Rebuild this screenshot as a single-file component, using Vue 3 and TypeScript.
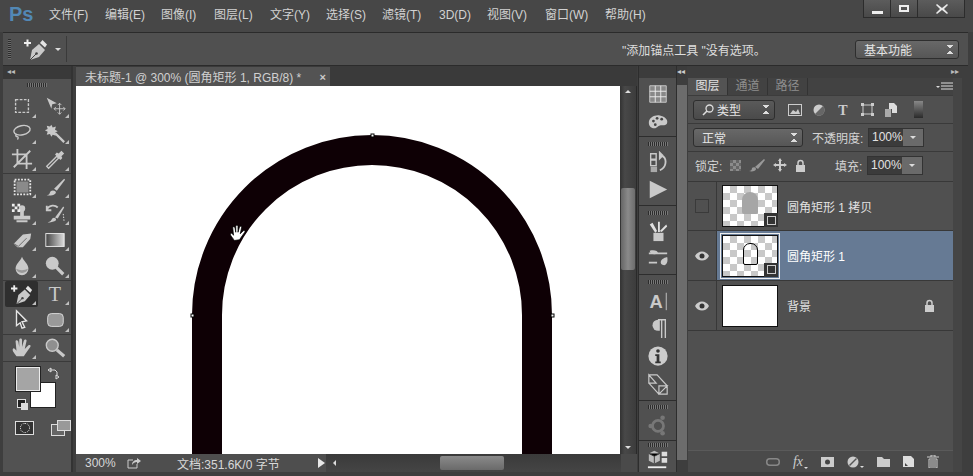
<script setup lang="ts">
const c = '#c9c9c9'
const menus = ['文件(F)', '编辑(E)', '图像(I)', '图层(L)', '文字(Y)', '选择(S)', '滤镜(T)', '3D(D)', '视图(V)', '窗口(W)', '帮助(H)']

const penShape = `<path d="M6 23l2-10 7-6 6 6-6 7z" fill="${c}"/><path d="M6 23l6-6" stroke="#444" fill="none"/><circle cx="12.500" cy="16.500" r="1.300" fill="#444"/><path d="M16 6l2.500-3 4.500 4.500-2 3z" fill="#e4e4e4"/>`
const plus = `<path d="M0 6h7M3.500 2.500v7" stroke="#eee" stroke-width="2"/>`

const toolGroups = [
  [
    { svg: `<rect x="5" y="5" width="14" height="14" fill="none" stroke="${c}" stroke-width="1.500" stroke-dasharray="3 1.500"/>`, more: true },
    { svg: `<path d="M3 3l11 6-5 1-1 5z" fill="${c}"/><path d="M17 9v12M11 15h12M17 9l-2 2M17 9l2 2M17 21l-2-2M17 21l2-2M11 15l2-2M11 15l2 2M23 15l-2-2M23 15l-2 2" stroke="${c}" fill="none"/>`, more: true },
    { svg: `<ellipse cx="12" cy="9" rx="9" ry="5" fill="none" stroke="${c}" stroke-width="1.500" transform="rotate(-12 12 9)"/><path d="M6 13c-2 2 0 3 1 3s1 2 0 3" stroke="${c}" stroke-width="1.500" fill="none"/>`, more: true },
    { svg: `<path d="M8 3l1.500 3 3.500-1-1 3.500 3 1.500-3 1.500 1 3.500-3.500-1L8 16l-1.500-3-3.500 1 1-3.500-3-1.500 3-1.500-1-3.500 3.500 1z" fill="${c}"/><path d="M12 12l10 10" stroke="${c}" stroke-width="2.500"/>`, more: true },
    { svg: `<path d="M7 1v16h16M1 7h16v16M3 21L21 3" stroke="${c}" stroke-width="2" fill="none"/>`, more: true },
    { svg: `<path d="M4 21l-1-1 11-11 2 2L5 22z" fill="none" stroke="${c}" stroke-width="1.500"/><path d="M12 7l6 6 2-2-1-2 3-3-3-3-3 3-2-1z" fill="${c}"/>`, more: true }
  ],
  [
    { svg: `<rect x="6" y="6" width="13" height="12" fill="#8a8a8a"/><path d="M4 4h17v16H4z" fill="none" stroke="#e6e6e6" stroke-dasharray="2 1.500" stroke-width="2"/>`, more: true },
    { svg: `<path d="M11 14L22 3l1 1-9 12z" fill="${c}"/><path d="M3 21c3 0 3-2 4-4 2-2 6-1 6 1s-4 4-10 3z" fill="${c}"/>`, more: true },
    { svg: `<circle cx="12" cy="7" r="3.500" fill="${c}"/><path d="M10 9h4v6h-4zM3 15h18v4H3zM6 20h12v2H6z" fill="${c}"/><path d="M1 2h3v3H1zM4 5h3v3H4zM7 2h3v3H7zM1 8h3v3H1zM7 8h3v3H7z" fill="#eee"/>`, more: true },
    { svg: `<path d="M3 8c3-5 9-5 12-2M3 4v5h5" stroke="${c}" stroke-width="2" fill="none"/><path d="M12 17L21 5l1 1-7 12z" fill="${c}"/><path d="M4 22c3 0 4-2 5-4 2-2 5 0 4 2-1 1-5 3-9 2z" fill="${c}"/><path d="M21 13l1 9" stroke="#eee" stroke-dasharray="1.500 1.500"/>`, more: true },
    { svg: `<path d="M3 16L13 6l9-1-1 6-8 9H7z" fill="${c}"/><path d="M3 16l5 3 9-9" stroke="#666" fill="none"/>`, more: true },
    { svg: `<defs><linearGradient id="toolGrad"><stop offset="0" stop-color="#444"/><stop offset="1" stop-color="#ddd"/></linearGradient></defs><rect x="2" y="5" width="20" height="14" fill="url(#toolGrad)" stroke="#eee"/>`, more: true },
    { svg: `<path d="M12 2c2 5 7 8 7 13a7 7 0 0 1-14 0c0-5 5-8 7-13z" fill="${c}"/><path d="M5.500 15c4 2 9 2 13 0-1 6-12 6-13 0z" fill="#999"/>`, more: true },
    { svg: `<circle cx="9" cy="9" r="7" fill="${c}"/><path d="M13 13l8 8" stroke="${c}" stroke-width="3.500"/>`, more: true }
  ],
  [
    { svg: plus + penShape, more: true, active: true },
    { svg: `<text x="12" y="20" text-anchor="middle" font-family="Liberation Serif, serif" font-size="22" fill="${c}">T</text>`, more: true },
    { svg: `<path d="M6 2l11 11-5 1 3 6-3 1-2-6-4 3z" fill="#3f3f3f" stroke="#e6e6e6" stroke-width="1.500"/>`, more: true },
    { svg: `<rect x="4" y="5" width="17" height="14" rx="4" fill="#999" stroke="#ddd"/>`, more: true }
  ],
  [
    { svg: `<path d="M6 21c-2-3-5-6-4-8s3 1 4 2L5 5c0-2 2-2 3 0l1 6V3c0-2 3-2 3 0v8l2-7c1-2 3-1 3 0l-2 9 4-4c2-1 3 0 2 2l-5 7-2 3z" fill="${c}"/>`, more: true },
    { svg: `<circle cx="9" cy="9" r="6.500" fill="#8f8f8f" stroke="${c}" stroke-width="1.500"/><path d="M14 14l8 7" stroke="${c}" stroke-width="3.500"/>`, more: false }
  ]
]

type DockIcon = { svg: string }
const dockGroups: DockIcon[][] = [
  [
    { svg: `<path d="M3 3h18v18H3z" fill="#888" stroke="#ccc"/><path d="M3 9h18M3 15h18M9 3v18M15 3v18" stroke="#eee"/>` },
    { svg: `<path d="M2 14c0-6 7-9 12-8s9 4 8 8-5 2-8 3-3 3-6 3-6-2-6-6z" fill="${c}"/><circle cx="7" cy="12" r="1.500" fill="#444"/><circle cx="11" cy="9" r="1.500" fill="#444"/><circle cx="16" cy="10" r="1.500" fill="#444"/><circle cx="9" cy="16" r="1.500" fill="#444"/>` }
  ],
  [
    { svg: `<path d="M4 3h6v6H4zM4 10h6v6H4z" fill="none" stroke="${c}" stroke-width="1.500"/><path d="M4 17h7v6H4z" fill="#aaa"/><path d="M14 5c5 0 7 4 6 9s-4 6-6 7M14 2v6l3-3z" stroke="${c}" stroke-width="2" fill="none"/>` },
    { svg: `<path d="M3 3l19 9.500L3 22z" fill="${c}"/>` }
  ],
  [
    { svg: `<path d="M7 14h11v9H7z" fill="${c}"/><path d="M9 14L3 5l3-2 5 9zM12 13V2h2v11zM16 13l6-6-1-2-7 7z" fill="#e0e0e0"/>` },
    { svg: `<path d="M2 7h20M2 17h9" stroke="${c}" stroke-width="2"/><path d="M3 4c5-1 9 0 9 3-5 2-9 0-9-3zM15 17c0-3 3-5 7-6 1 4 0 8-3 9-2 0-4-1-4-3z" fill="${c}"/>` }
  ],
  [
    { svg: `<text x="10" y="20" text-anchor="middle" font-family="Liberation Sans, sans-serif" font-weight="700" font-size="20" fill="${c}">A</text><path d="M21 3v19" stroke="${c}"/>` },
    { svg: `<path d="M12 3h8v20M16 3v20" stroke="${c}" stroke-width="1.500" fill="none"/><path d="M12 3a6 6 0 0 0 0 12h2V3z" fill="${c}"/>` },
    { svg: `<circle cx="12" cy="12" r="10.500" fill="#ccc"/><circle cx="12" cy="6.500" r="2" fill="#333"/><path d="M9 10h4.500v8H15v2H9v-2h1.500v-6H9z" fill="#333"/>` },
    { svg: `<path d="M2 2h9l11 12v9h-9L2 11zM2 2v9h8zM13 23v-9h9zM11 2l11 12" fill="none" stroke="${c}" stroke-width="1.300"/>` }
  ],
  [
    { svg: `<circle cx="12" cy="13" r="6" fill="none" stroke="#777" stroke-width="3"/><circle cx="17" cy="4" r="2.500" fill="#777"/><circle cx="4" cy="13" r="2.500" fill="#777"/><circle cx="17" cy="21" r="2.500" fill="#777"/>` }
  ],
  [
    { svg: `<path d="M2 6l6-3 6 3v8l-6 3-6-3z" fill="#bbb"/><path d="M8 9v8M2 6l6 3 6-3" stroke="#333"/><path d="M16 4h6v5h-6zM16 11h6v5h-6z" fill="#ddd"/><path d="M1 20h20v2H1z" fill="#eee"/>` }
  ]
]

const dockHeights = [59, 69, 69, 126, 40, 31]
</script>

<template>
  <div class="app">
    <header class="menubar">
      <span class="logo">Ps</span>
      <nav class="menus">
        <span v-for="m in menus" :key="m">{{ m }}</span>
      </nav>
      <div class="winbtns">
        <span class="wb"><i class="min"></i></span>
        <span class="wb"><i class="max"></i></span>
        <span class="wb close"><svg width="12" height="10" viewBox="0 0 12 10"><path d="M1 0l5 4 5-4 1 1-4 4 4 4-1 1-5-4-5 4-1-1 4-4-4-4z" fill="#e8e8e8" /></svg></span>
      </div>
    </header>

    <div class="options">
      <span class="grip-v"></span>
      <svg class="opt-pen" width="24" height="24" viewBox="0 0 24 24" v-html="plus + penShape"></svg>
      <span class="caret"></span>
      <span class="opt-sep"></span>
      <span class="opt-text">"添加锚点工具 "没有选项。</span>
      <div class="select workspace"><span>基本功能</span><i class="updown"></i></div>
    </div>

    <main class="workspace-row">
      <aside class="tools">
        <div class="collapse">◂◂</div>
        <div class="grip"></div>
        <div v-for="(g, i) in toolGroups" :key="i" class="tool-group">
          <div v-for="(t, j) in g" :key="j" class="tool" :class="{ active: t.active, more: t.more }">
            <svg width="22" height="22" viewBox="0 0 24 24" v-html="t.svg"></svg>
          </div>
        </div>
        <div class="colors">
          <span class="bg-swatch"></span>
          <span class="fg-swatch"></span>
          <svg class="swap" width="13" height="13" viewBox="0 0 13 13"><path d="M1 3l3-2v4zM12 10L9 8v4zM3 3h5l2 2v4" stroke="#ddd" fill="none" stroke-width="1" /></svg>
          <span class="mini-a"></span>
          <span class="mini-b"></span>
        </div>
        <div class="mode-row">
          <span class="quickmask"><i></i></span>
          <svg width="20" height="16" viewBox="0 0 20 16"><rect x="0.500" y="4.500" width="13" height="11" fill="#666" stroke="#ddd" /><rect x="6.500" y="0.500" width="13" height="10" fill="#999" stroke="#ddd" /></svg>
        </div>
      </aside>

      <section class="doc">
        <div class="tabbar">
          <div class="tab">
            <span>未标题-1 @ 300% (圆角矩形 1, RGB/8) *</span>
            <b>×</b>
          </div>
        </div>
        <div class="doc-body">
          <div class="canvas">
            <svg class="arch" width="544" height="368" viewBox="0 0 544 368">
              <path d="M131 400V229a165 165 0 0 1 330 0V400" fill="none" stroke="#0e0005" stroke-width="30" />
              <rect x="115" y="228" width="3" height="3" fill="#fff" stroke="#000" />
              <rect x="475" y="228" width="3" height="3" fill="#fff" stroke="#000" />
              <rect x="295" y="48" width="3" height="3" fill="#fff" stroke="#000" />
            </svg>
            <svg class="cursor" width="18" height="18" viewBox="0 0 24 24"><path d="M7 22c-2-4-6-7-5-9s3 0 4 2L5 5c0-2 2-2 3 0l1 6V3c0-2 3-2 3 0v8l2-7c1-2 3-1 3 0l-2 9 4-4c2-1 3 0 2 2l-5 7-2 3z" fill="#fff" stroke="#000" /></svg>
          </div>
          <div class="vscroll">
            <span class="arrow-up"></span>
            <span class="vthumb"></span>
            <span class="arrow-down"></span>
          </div>
        </div>
        <div class="status">
          <span class="zoomval">300%</span>
          <svg class="share" width="14" height="12" viewBox="0 0 14 12"><path d="M1 3h5M1 3v8h9V7" stroke="#ccc" fill="none" /><path d="M5 8c0-3 2-5 5-5V1l4 3-4 3V5C8 5 6 6 5 8z" fill="#ccc" /></svg>
          <span class="docinfo">文档:351.6K/0 字节</span>
          <span class="play"></span>
          <div class="hscroll">
            <span class="arrow-left"></span>
            <span class="hthumb"></span>
          </div>
        </div>
      </section>

      <aside class="dock">
        <div class="dock-head"></div>
        <div v-for="(g, i) in dockGroups" :key="i" class="dock-group" :style="{ height: dockHeights[i] + 'px' }">
          <div v-if="i > 0" class="grip dock-grip"></div>
          <svg v-for="(ic, j) in g" :key="j" width="22" height="22" viewBox="0 0 24 24" v-html="ic.svg"></svg>
        </div>
      </aside>
      <div class="dock-scroll">
        <div class="dock-scroll-head">◂◂</div>
        <div class="dock-scroll-bar"></div>
      </div>

      <aside class="panel">
        <div class="panel-head">▸▸</div>
        <div class="tabs">
          <span class="ptab on">图层</span>
          <span class="ptab">通道</span>
          <span class="ptab">路径</span>
          <span class="pmenu">
            <i class="caret small"></i>
            <svg width="12" height="9" viewBox="0 0 12 9"><path d="M0 1h12M0 4h12M0 7h12" stroke="#ddd" /></svg>
          </span>
        </div>
        <div class="row filter">
          <div class="select type">
            <span class="type-label">
              <svg width="12" height="12" viewBox="0 0 12 12"><circle cx="7.500" cy="4.500" r="3.500" fill="none" stroke="#ddd" stroke-width="1.300" /><path d="M5 7l-4 4" stroke="#ddd" stroke-width="1.600" /></svg>
              类型
            </span>
            <i class="updown"></i>
          </div>
          <div class="filter-icons">
            <svg width="14" height="12" viewBox="0 0 14 12"><rect x="0.500" y="0.500" width="13" height="11" fill="none" stroke="#ccc" /><path d="M2 10l3-4 3 2 2-3 2 5z" fill="#ccc" /></svg>
            <svg width="12" height="12" viewBox="0 0 12 12"><circle cx="6" cy="6" r="5.500" fill="#ccc" /><path d="M10 2a5.500 5.500 0 0 1-8 8z" fill="#666" /></svg>
            <svg width="14" height="14" viewBox="0 0 14 14"><text x="7" y="12" text-anchor="middle" font-family="Liberation Serif, serif" font-weight="700" font-size="14" fill="#ccc">T</text></svg>
            <svg width="13" height="13" viewBox="0 0 13 13"><rect x="2" y="2" width="9" height="9" fill="none" stroke="#ccc" /><path d="M0 0h3v3H0zM10 0h3v3h-3zM0 10h3v3H0zM10 10h3v3h-3z" fill="#ccc" /></svg>
            <svg width="12" height="14" viewBox="0 0 12 14"><path d="M4 0h5l3 3v7H7V6H4z" fill="#ddd" /><path d="M0 6h6v8H0z" fill="#aaa" /></svg>
            <span class="filter-toggle"></span>
          </div>
        </div>
        <div class="row blend">
          <div class="select mode"><span>正常</span><i class="updown"></i></div>
          <span class="lbl">不透明度:</span>
          <div class="pct"><span>100%</span><i><b class="caret"></b></i></div>
        </div>
        <div class="row lock">
          <span class="lbl">锁定:</span>
          <div class="lock-icons">
            <span class="checker-mini"></span>
            <svg width="16" height="14" viewBox="0 0 16 14"><path d="M6 9l9-8 1 1-7 9z" fill="#999" /><path d="M0 13c2 0 3-1 3-3 1-1 4-1 4 1s-4 3-7 2z" fill="#999" /></svg>
            <svg width="14" height="14" viewBox="0 0 14 14"><path d="M7 0l2 3H8v3h3V5l3 2-3 2V8H8v3h1l-2 3-2-3h1V8H3v1L0 7l3-2v1h3V3H5z" fill="#ccc" /></svg>
            <svg width="11" height="13" viewBox="0 0 11 13"><path d="M3 6V4a2.500 2.500 0 0 1 5 0v2" stroke="#ccc" stroke-width="1.500" fill="none" /><rect x="1" y="6" width="9" height="7" fill="#ccc" /></svg>
          </div>
          <span class="lbl fill-lbl">填充:</span>
          <div class="pct"><span>100%</span><i><b class="caret"></b></i></div>
        </div>

        <div class="layers">
          <div class="layer">
            <div class="eye-cell"><span class="eye-off"></span></div>
            <div class="thumb checker">
              <span class="ghost"></span>
              <span class="badge"><i></i></span>
            </div>
            <span class="lname">圆角矩形 1 拷贝</span>
          </div>
          <div class="layer selected">
            <div class="eye-cell">
              <svg width="14" height="10" viewBox="0 0 14 10"><path d="M0 5c3-6 11-6 14 0-3 6-11 6-14 0z" fill="#ccc" /><circle cx="7" cy="5" r="2.500" fill="#333" /></svg>
            </div>
            <div class="thumb checker framed">
              <span class="outline"></span>
              <span class="badge"><i></i></span>
            </div>
            <span class="lname">圆角矩形 1</span>
          </div>
          <div class="layer">
            <div class="eye-cell">
              <svg width="14" height="10" viewBox="0 0 14 10"><path d="M0 5c3-6 11-6 14 0-3 6-11 6-14 0z" fill="#ccc" /><circle cx="7" cy="5" r="2.500" fill="#333" /></svg>
            </div>
            <div class="thumb white"></div>
            <span class="lname">背景</span>
            <svg class="layer-lock" width="11" height="13" viewBox="0 0 11 13"><path d="M3 6V4a2.500 2.500 0 0 1 5 0v2" stroke="#ccc" stroke-width="1.500" fill="none" /><rect x="1" y="6" width="9" height="7" fill="#ccc" /></svg>
          </div>
        </div>

        <div class="panel-foot">
          <svg width="14" height="8" viewBox="0 0 14 8"><rect x="0.750" y="0.750" width="12.500" height="6.500" rx="3" fill="none" stroke="#888" stroke-width="1.500" /></svg>
          <span class="fx">fx<b class="caret small"></b></span>
          <svg width="13" height="10" viewBox="0 0 13 10"><path d="M0 0h13v10H0z" fill="#ccc" /><circle cx="6.500" cy="5" r="2.500" fill="#444" /></svg>
          <span class="adj"><svg width="12" height="12" viewBox="0 0 12 12"><circle cx="6" cy="6" r="5.500" fill="#ccc" /><path d="M9.500 2.500l-7 7" stroke="#555" stroke-width="1.500" /></svg><b class="caret small"></b></span>
          <svg width="13" height="10" viewBox="0 0 13 10"><path d="M0 0h5l2 2h6v8H0z" fill="#ccc" /></svg>
          <svg width="11" height="11" viewBox="0 0 11 11"><path d="M0 0h8l3 3v8H0z" fill="#ddd" /><path d="M2 7l3 3H2z" fill="#444" /></svg>
          <svg width="12" height="13" viewBox="0 0 12 13"><path d="M0 2h12M4 2V0h4v2M2 4h8v9H2z" stroke="#ccc" fill="none" /><path d="M4 5v7M6 5v7M8 5v7" stroke="#ccc" /></svg>
        </div>
      </aside>
      <div class="panel-scroll"></div>
    </main>
  </div>
</template>

<style scoped>
.app {
  width: 973px;
  height: 476px;
  display: flex;
  flex-direction: column;
  overflow: hidden;
  background: #3e3e3e;
  color: #d6d6d6;
  font: 12px "Liberation Sans", "Noto Sans CJK SC", sans-serif;
}
i, b { display: block; font-style: normal; }

.menubar {
  height: 32px;
  flex: none;
  display: flex;
  background: #474747;
  position: relative;
}
.logo {
  margin: 1px 0 0 9px;
  width: 40px;
  font: bold 20px/26px "Liberation Sans", sans-serif;
  color: #5288b5;
}
.menus {
  display: grid;
  grid-template-columns: 56px 56px 53px 56px 56px 56px 57px 48px 58px 60px auto;
  height: 30px;
  line-height: 31px;
  color: #d2d2d2;
}
.winbtns {
  position: absolute;
  top: 0;
  left: 863px;
  width: 102px;
  height: 18px;
  display: grid;
  grid-template-columns: 27px 27px 48px;
  background: linear-gradient(#5c5c5c, #494949);
  border: solid #2c2c2c;
  border-width: 0 1px 1px;
  box-sizing: border-box;
}
.wb {
  display: flex;
  align-items: center;
  justify-content: center;
  border-right: 1px solid #2c2c2c;
}
.wb.close { border-right: 0; }
.min { width: 11px; height: 3px; background: #eee; margin-top: 7px; }
.max { width: 10px; height: 7px; border: 2px solid #eee; box-sizing: border-box; }

.options {
  height: 34px;
  flex: none;
  margin: 0 5px 0 3px;
  display: flex;
  align-items: center;
  background: #505050;
  border-top: 1px solid #2b2b2b;
  border-bottom: 1px solid #2b2b2b;
  box-sizing: border-box;
}
.grip-v {
  width: 3px;
  height: 20px;
  margin-left: 5px;
  background: repeating-linear-gradient(#2c2c2c 0 1px, #6a6a6a 1px 2px);
}
.opt-pen { margin-left: 13px; }
.caret {
  width: 0;
  height: 0;
  border: 3px solid transparent;
  border-top: 3px solid #dcdcdc;
  border-bottom: 0;
}
.caret.small { border-width: 2px 2px 0; }
.options > .caret { margin-left: 7px; }
.opt-sep { width: 1px; height: 26px; background: #3a3a3a; margin-left: 5px; }
.opt-text { margin-left: 555px; width: 233px; color: #dedede; }

.select {
  display: flex;
  align-items: center;
  justify-content: space-between;
  box-sizing: border-box;
  background: linear-gradient(#686868, #565656);
  border: 1px solid #2e2e2e;
  border-radius: 3px;
  padding: 0 5px 0 8px;
  color: #e4e4e4;
}
.workspace { width: 104px; height: 19px; margin-top: 1px; }
.updown {
  width: 6px;
  height: 9px;
  background:
    linear-gradient(45deg, transparent 50%, #ddd 50%) 0 0 / 3px 4px no-repeat,
    linear-gradient(-45deg, transparent 50%, #ddd 50%) 3px 0 / 3px 4px no-repeat,
    linear-gradient(135deg, transparent 50%, #ddd 50%) 0 5px / 3px 4px no-repeat,
    linear-gradient(-135deg, transparent 50%, #ddd 50%) 3px 5px / 3px 4px no-repeat;
}

.workspace-row {
  flex: 1;
  min-height: 0;
  display: flex;
  padding: 0 0 4px 3px;
}

.tools {
  width: 70px;
  flex: none;
  background: #525252;
  box-sizing: border-box;
  border-right: 2px solid #333;
  margin-right: 3px;
}
.collapse {
  height: 13px;
  background: #393939;
  font-size: 8px;
  line-height: 12px;
  padding-left: 4px;
  color: #bbb;
}
.grip {
  width: 20px;
  height: 4px;
  margin: 4px auto 6px;
  background: repeating-linear-gradient(90deg, #2c2c2c 0 1px, #777 1px 2px);
}
.tool-group {
  display: grid;
  grid-template-columns: 33px 33px;
  grid-auto-rows: 26.500px;
  padding: 0 1px 0 2px;
  border-bottom: 1px solid #3a3a3a;
}
.tool {
  position: relative;
  display: flex;
  align-items: center;
  justify-content: center;
}
.tool.active {
  background: #2f2f2f;
  border-radius: 2px;
}
.tool.more::after {
  content: "";
  position: absolute;
  right: 2px;
  bottom: 2px;
  border: 2px solid #c0c0c0;
  border-top-color: transparent;
  border-left-color: transparent;
}
.tool-group:last-of-type { border-bottom: 0; }
.colors {
  position: relative;
  height: 52px;
}
.fg-swatch, .bg-swatch {
  position: absolute;
  width: 24px;
  height: 24px;
  box-sizing: border-box;
}
.fg-swatch { left: 13px; top: 5px; background: #a5a5a5; border: 1px solid #ececec; outline: 1px solid #222; }
.bg-swatch { left: 28px; top: 21px; background: #fff; outline: 1px solid #222; }
.swap { position: absolute; left: 44px; top: 5px; }
.mini-a, .mini-b { position: absolute; width: 7px; height: 7px; }
.mini-a { left: 14px; top: 37px; background: #222; border: 1px solid #ddd; }
.mini-b { left: 18px; top: 41px; background: #ddd; }
.mode-row {
  display: flex;
  align-items: center;
  gap: 17px;
  padding: 6px 0 0 12px;
}
.quickmask {
  width: 17px;
  height: 12px;
  background: #333;
  border: 1px solid #ddd;
  display: flex;
  align-items: center;
  justify-content: center;
}
.quickmask i { width: 8px; height: 8px; border: 1px dotted #eee; border-radius: 50%; }

.doc {
  width: 561px;
  flex: none;
  display: flex;
  flex-direction: column;
}
.tabbar { height: 20px; flex: none; background: #3a3a3a; }
.tab {
  width: 254px;
  height: 19px;
  margin-top: 1px;
  box-sizing: border-box;
  background: #535353;
  display: flex;
  justify-content: space-between;
  align-items: center;
  padding: 0 4px 0 9px;
  color: #d0d0d0;
}
.tab b { font-size: 11px; color: #ccc; }
.doc-body { flex: 1; min-height: 0; display: flex; }
.canvas { width: 544px; flex: none; background: #fff; position: relative; overflow: hidden; }
.arch { display: block; }
.cursor { position: absolute; left: 153px; top: 138px; }
.vscroll {
  flex: 1;
  position: relative;
  background: linear-gradient(90deg, #333, #484848 30%, #3c3c3c);
  border-right: 1px solid #2a2a2a;
}
.vthumb {
  position: absolute;
  left: 1px;
  right: 1px;
  top: 102px;
  height: 82px;
  border-radius: 2px;
  background: linear-gradient(90deg, #666, #8a8a8a 50%, #6c6c6c);
}
.arrow-up, .arrow-down { position: absolute; left: 5px; width: 0; border: 3px solid transparent; }
.arrow-up { top: 4px; border-bottom-color: #ddd; border-top: 0; }
.arrow-down { bottom: 5px; border-top-color: #ddd; border-bottom: 0; }

.status {
  height: 18px;
  flex: none;
  display: flex;
  align-items: center;
  position: relative;
  background: #4e4e4e;
  color: #d8d8d8;
  box-sizing: border-box;
  border-right: 16px solid #4a4a4a;
}
.zoomval { margin-left: 9px; width: 36px; }
.share { margin-left: 6px; }
.docinfo { margin-left: 36px; width: 141px; }
.play {
  border: 5px solid transparent;
  border-left: 7px solid #e8e8e8;
  border-right: 0;
}
.hscroll {
  position: absolute;
  left: 250px;
  right: 0;
  top: 0;
  bottom: 0;
  background: linear-gradient(#3a3a3a, #454545);
}
.hthumb {
  position: absolute;
  left: 114px;
  width: 64px;
  top: 2px;
  bottom: 2px;
  border-radius: 2px;
  background: linear-gradient(#8a8a8a, #6a6a6a);
}
.arrow-left {
  position: absolute;
  left: 7px;
  top: 6px;
  border: 3px solid transparent;
  border-right-color: #ddd;
  border-left: 0;
}

.dock {
  width: 37px;
  flex: none;
  margin-left: 1px;
  background: #505050;
  border: solid #2d2d2d;
  border-width: 0 1px;
}
.dock-head { height: 12px; background: #3c3c3c; }
.dock-group {
  box-sizing: border-box;
  display: flex;
  flex-direction: column;
  align-items: center;
  justify-content: space-around;
  padding: 2px 0 2px;
  border-bottom: 1px solid #2d2d2d;
}
.dock-group:first-of-type { padding-bottom: 5px; }
.dock-group:last-of-type { justify-content: flex-start; gap: 1px; border-bottom: 0; }
.dock-grip { margin: 0 auto; flex: none; }
.dock-scroll {
  width: 10px;
  flex: none;
  display: flex;
  flex-direction: column;
}
.dock-scroll-head {
  height: 12px;
  flex: none;
  background: #3c3c3c;
  font-size: 8px;
  line-height: 11px;
  color: #ccc;
  white-space: nowrap;
}
.dock-scroll-bar {
  flex: 1;
  margin: 7px 0 12px;
  background: #6c6c6c;
}

.panel {
  width: 265px;
  flex: none;
  margin-left: 1px;
  display: flex;
  flex-direction: column;
  background: #505050;
}
.panel-head {
  height: 12px;
  flex: none;
  background: #3e3e3e;
  text-align: right;
  padding-right: 4px;
  font-size: 8px;
  line-height: 11px;
  color: #bbb;
  margin-right: -10px;
}
.tabs {
  height: 17px;
  flex: none;
  display: flex;
  background: #424242;
  border-bottom: 1px solid #3c3c3c;
  position: relative;
}
.ptab {
  width: 39px;
  text-align: center;
  line-height: 17px;
  color: #8e8e8e;
  border-right: 1px solid #333;
}
.ptab.on { background: #535353; color: #e2e2e2; }
.pmenu {
  position: absolute;
  right: 0;
  top: 4px;
  display: flex;
  align-items: center;
  gap: 1px;
}
.row { display: flex; align-items: center; flex: none; box-sizing: border-box; border-bottom: 1px solid #3a3a3a; }
.filter { height: 28px; padding-left: 5px; }
.type { width: 82px; height: 20px; background: linear-gradient(#5a5a5a, #4a4a4a); }
.type-label { display: flex; align-items: center; gap: 3px; }
.filter-icons { display: flex; align-items: center; gap: 11px; margin-left: 13px; }
.filter-toggle { width: 9px; height: 17px; margin-left: 6px; background: linear-gradient(#888, #2a2a2a); }
.blend { height: 28px; padding-left: 5px; }
.mode { width: 110px; height: 19px; padding-left: 8px; }
.lbl { color: #d4d4d4; }
.blend .lbl { margin-left: 9px; width: 56px; }
.pct {
  display: flex;
  width: 56px;
  height: 19px;
  border: 1px solid #333;
  box-sizing: border-box;
  background: #3b3b3b;
  line-height: 17px;
  color: #e2e2e2;
}
.pct span { flex: 1; padding-left: 3px; }
.pct i {
  width: 20px;
  background: #6a6a6a;
  display: flex;
  align-items: center;
  justify-content: center;
}
.lock { height: 29px; padding: 0 0 3px 7px; border-bottom: 0; }
.lock > .lbl { width: 29px; }
.lock-icons { display: flex; align-items: center; gap: 8px; margin-left: 6px; width: 105px; }
.checker-mini {
  width: 11px;
  height: 11px;
  background: repeating-conic-gradient(#8b8b8b 0 25%, #666 0 50%) 0 0 / 6px 6px;
}
.lock > .fill-lbl { width: 32px; }

.layers { flex: 1; min-height: 0; background: #505050; }
.layer {
  height: 50px;
  box-sizing: border-box;
  display: flex;
  align-items: center;
  border-bottom: 1px solid #383838;
  position: relative;
}
.layer:first-child { border-top: 1px solid #383838; }
.layer.selected { background: #667a94; color: #fff; }
.eye-cell {
  width: 29px;
  height: 100%;
  flex: none;
  display: flex;
  align-items: center;
  justify-content: center;
  border-right: 1px solid #383838;
  background: #505050;
  box-sizing: border-box;
}
.eye-off { width: 12px; height: 12px; border: 1px solid #3a3a3a; }
.thumb {
  position: relative;
  width: 56px;
  height: 42px;
  flex: none;
  margin-left: 5px;
  box-sizing: border-box;
  border: 1px solid #111;
}
.checker { background: repeating-conic-gradient(#c8c8c8 0 25%, #fff 0 50%) 0 0 / 14px 14px; }
.white { background: #fff; }
.framed { outline: 1px solid #eee; outline-offset: 1px; }
.ghost {
  position: absolute;
  left: 19px;
  top: 6px;
  width: 16px;
  height: 22px;
  border-radius: 8px 8px 2px 2px;
  background: #a6a6a6;
}
.outline {
  position: absolute;
  left: 20px;
  top: 7px;
  width: 15px;
  height: 22px;
  box-sizing: border-box;
  border: 1px solid #000;
  border-radius: 7px 7px 2px 2px;
}
.badge {
  position: absolute;
  right: -1px;
  bottom: -1px;
  width: 14px;
  height: 14px;
  background: #333;
  display: flex;
  align-items: center;
  justify-content: center;
}
.badge i { width: 9px; height: 9px; border: 1px solid #ccc; box-sizing: border-box; }
.lname { margin-left: 9px; color: #e2e2e2; }
.selected .lname { color: #fff; }
.layer-lock { position: absolute; left: 236px; top: 18px; }

.panel-foot {
  height: 21px;
  flex: none;
  display: flex;
  align-items: center;
  justify-content: flex-end;
  gap: 13px;
  padding-right: 14px;
  background: #4a4a4a;
  border-top: 1px solid #5a5a5a;
}
.fx {
  display: flex;
  align-items: flex-end;
  gap: 1px;
  font: italic 14px/14px "Liberation Serif", serif;
  color: #ccc;
}
.adj { display: flex; align-items: flex-end; gap: 1px; }
.panel-scroll {
  width: 9px;
  flex: none;
  background: #454545;
  margin: 12px 0 0;
}
</style>

<style>
html, body { background: #3e3e3e; }
</style>
